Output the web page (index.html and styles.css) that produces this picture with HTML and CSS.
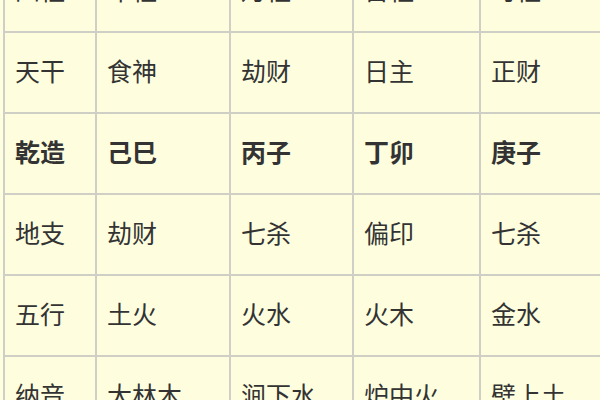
FILE: index.html
```html
<!DOCTYPE html>
<html lang="zh">
<head>
<meta charset="utf-8">
<link rel="stylesheet" href="styles.css">
</head>
<body>
<table class="bazi">
  <colgroup>
    <col class="c1"><col class="c2"><col class="c3"><col class="c4"><col class="c5">
  </colgroup>
  <tr><td>四柱</td><td>年柱</td><td>月柱</td><td>日柱</td><td>时柱</td></tr>
  <tr><td>天干</td><td>食神</td><td>劫财</td><td>日主</td><td>正财</td></tr>
  <tr class="bold"><td>乾造</td><td>己巳</td><td>丙子</td><td>丁卯</td><td>庚子</td></tr>
  <tr><td>地支</td><td>劫财</td><td>七杀</td><td>偏印</td><td>七杀</td></tr>
  <tr><td>五行</td><td>土火</td><td>火水</td><td>火木</td><td>金水</td></tr>
  <tr><td>纳音</td><td>大林木</td><td>涧下水</td><td>炉中火</td><td>壁上土</td></tr>
</table>
</body>
</html>
```
FILE: styles.css
```css
html, body {
  margin: 0;
  padding: 0;
  overflow: hidden;
  background: #fefee0;
}
body {
  width: 600px;
  height: 400px;
}
.bazi {
  border-collapse: collapse;
  margin: -50px 0 0 3px;
  table-layout: fixed;
  width: 640px;
  font-family: "Noto Sans CJK SC", "Noto Sans", sans-serif;
  font-size: 25px;
  color: #333;
  background: #fefedf;
}
.c1 { width: 92px; }
.c2 { width: 134px; }
.c3 { width: 123px; }
.c4 { width: 127px; }
.c5 { width: 164px; }
.bazi td {
  border: 2px solid #cfcfc6;
  height: 74px;
  padding: 0 0 5px 10px;
  vertical-align: middle;
  line-height: 1;
  white-space: nowrap;
}
.bold td {
  font-weight: 700;
}
```
